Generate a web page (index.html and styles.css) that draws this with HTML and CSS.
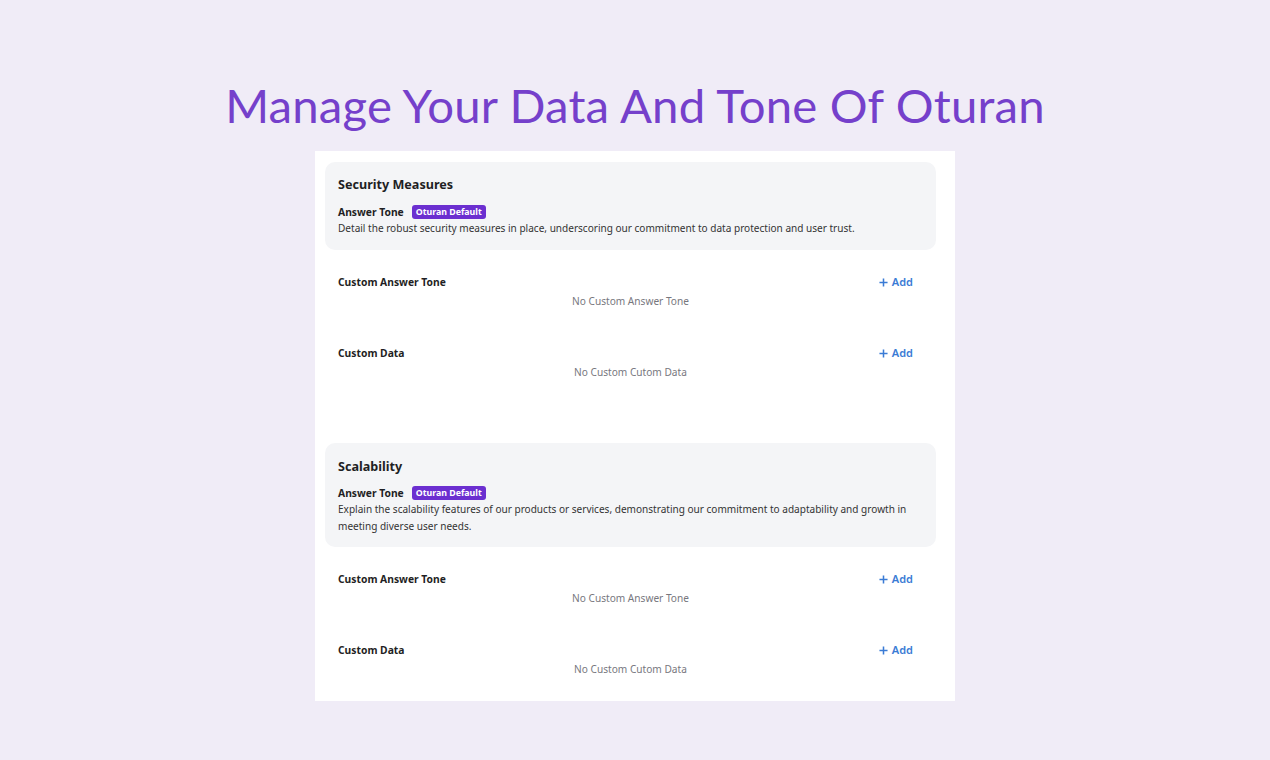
FILE: index.html
```html
<!DOCTYPE html>
<html>
<head>
<meta charset="utf-8">
<link rel="stylesheet" href="styles.css">
</head>
<body>
<h1 class="page-title">Manage Your Data And Tone Of Oturan</h1>
<div class="panel">
  <section class="section">
    <div class="card">
      <div class="card-title">Security Measures</div>
      <div class="tone-line"><span class="tone-label">Answer Tone</span><span class="badge">Oturan Default</span></div>
      <p class="desc">Detail the robust security measures in place, underscoring our commitment to data protection and user trust.</p>
    </div>
    <div class="block">
      <div class="block-head"><span class="block-title">Custom Answer Tone</span><span class="add"><svg class="plus" viewBox="0 0 10 10" width="9" height="9"><path d="M5 0.5V9.5M0.5 5H9.5"/></svg>Add</span></div>
      <div class="empty">No Custom Answer Tone</div>
    </div>
    <div class="block">
      <div class="block-head"><span class="block-title">Custom Data</span><span class="add"><svg class="plus" viewBox="0 0 10 10" width="9" height="9"><path d="M5 0.5V9.5M0.5 5H9.5"/></svg>Add</span></div>
      <div class="empty">No Custom Cutom Data</div>
    </div>
  </section>
  <section class="section">
    <div class="card">
      <div class="card-title">Scalability</div>
      <div class="tone-line"><span class="tone-label">Answer Tone</span><span class="badge">Oturan Default</span></div>
      <p class="desc">Explain the scalability features of our products or services, demonstrating our commitment to adaptability and growth in meeting diverse user needs.</p>
    </div>
    <div class="block">
      <div class="block-head"><span class="block-title">Custom Answer Tone</span><span class="add"><svg class="plus" viewBox="0 0 10 10" width="9" height="9"><path d="M5 0.5V9.5M0.5 5H9.5"/></svg>Add</span></div>
      <div class="empty">No Custom Answer Tone</div>
    </div>
    <div class="block">
      <div class="block-head"><span class="block-title">Custom Data</span><span class="add"><svg class="plus" viewBox="0 0 10 10" width="9" height="9"><path d="M5 0.5V9.5M0.5 5H9.5"/></svg>Add</span></div>
      <div class="empty">No Custom Cutom Data</div>
    </div>
  </section>
</div>
</body>
</html>
```
FILE: styles.css
```css
* { box-sizing: border-box; }
html, body { margin: 0; padding: 0; }
body {
  background: #f0ecf7;
  font-family: "Noto Sans", "Open Sans", sans-serif;
  color: #1f1f24;
  width: 1270px;
  height: 760px;
  overflow: hidden;
}
.page-title {
  margin: 0;
  padding-top: 76px;
  height: 151px;
  text-align: center;
  font-family: Lato, "Noto Sans", sans-serif;
  font-weight: 400;
  font-size: 47.3px;
  line-height: 58px;
  color: #7540cb;
  letter-spacing: 0.2px;
}
.panel {
  width: 640px;
  margin: 0 auto;
  background: #ffffff;
  padding: 11px 19px 13px 10px;
}
.section + .section { margin-top: 52px; }
.card {
  background: #f4f5f7;
  border-radius: 10px;
  padding: 14px 13px 13px 13px;
}
.card-title {
  font-size: 12.6px;
  font-weight: 700;
  line-height: 18px;
  margin-bottom: 10px;
}
.section + .section .card-title { margin-top: 1px; margin-bottom: 9px; }
.section + .section .card { padding-bottom: 12px; }
.tone-line {
  display: flex;
  align-items: center;
  gap: 8px;
  height: 16px;
}
.tone-label {
  font-size: 10.3px;
  font-weight: 700;
}
.badge {
  background: #6b2fd0;
  color: #fff;
  font-size: 8.8px;
  font-weight: 700;
  line-height: 14px;
  padding: 0 4px;
  border-radius: 3px;
}
.desc {
  margin: 0;
  font-size: 10.05px;
  line-height: 17px;
  color: #333;
}
.block {
  padding: 24px 23px 10px 13px;
}
.card + .block { padding-top: 23px; }
.block-head {
  display: flex;
  justify-content: space-between;
  align-items: center;
  height: 18px;
}
.block-title {
  font-size: 10.3px;
  font-weight: 700;
}
.add {
  display: flex;
  align-items: center;
  gap: 4px;
  font-size: 11px;
  font-weight: 600;
  line-height: 18px;
  color: #3a7bd5;
}
.plus { display: block; }
.plus path { stroke: #3a7bd5; stroke-width: 1.7; fill: none; }
.empty {
  margin-top: 1px;
  text-align: center;
  font-size: 10.15px;
  line-height: 18px;
  color: #77777e;
  padding-left: 10px;
}
```
